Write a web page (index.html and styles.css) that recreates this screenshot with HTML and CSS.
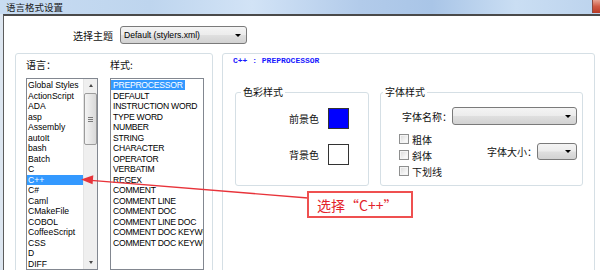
FILE: index.html
```html
<!DOCTYPE html>
<html lang="zh-CN">
<head>
<meta charset="utf-8">
<title>语言格式设置</title>
<link rel="stylesheet" href="styles.css">
</head>
<body>
<div class="titlebar">
  <span class="title">语言格式设置</span>
  <span class="close"></span>
</div>
<div class="frame">
  <div class="theme-row">
    <span class="cjk label">选择主题</span>
    <div class="combo theme-combo"><span>Default (stylers.xml)</span><i class="arrow"></i></div>
  </div>
  <div class="panels">
    <div class="group left-group">
      <div class="col lang-col">
        <div class="cjk heading">语言：</div>
        <div class="listbox lang-list">
          <ul class="items">
            <li>Global Styles</li>
            <li>ActionScript</li>
            <li>ADA</li>
            <li>asp</li>
            <li>Assembly</li>
            <li>autoIt</li>
            <li>bash</li>
            <li>Batch</li>
            <li>C</li>
            <li class="sel">C++</li>
            <li>C#</li>
            <li>Caml</li>
            <li>CMakeFile</li>
            <li>COBOL</li>
            <li>CoffeeScript</li>
            <li>CSS</li>
            <li>D</li>
            <li>DIFF</li>
          </ul>
          <div class="scrollbar">
            <div class="sb-btn"><i class="up"></i></div>
            <div class="thumb"><i></i><i></i><i></i></div>
            <div class="sb-track"></div>
            <div class="sb-btn"><i class="down"></i></div>
          </div>
        </div>
      </div>
      <div class="col style-col">
        <div class="cjk heading">样式:</div>
        <div class="listbox style-list">
          <ul class="items">
            <li><span class="sel">PREPROCESSOR</span></li>
            <li><span>DEFAULT</span></li>
            <li><span>INSTRUCTION WORD</span></li>
            <li><span>TYPE WORD</span></li>
            <li><span>NUMBER</span></li>
            <li><span>STRING</span></li>
            <li><span>CHARACTER</span></li>
            <li><span>OPERATOR</span></li>
            <li><span>VERBATIM</span></li>
            <li><span>REGEX</span></li>
            <li><span>COMMENT</span></li>
            <li><span>COMMENT LINE</span></li>
            <li><span>COMMENT DOC</span></li>
            <li><span>COMMENT LINE DOC</span></li>
            <li><span>COMMENT DOC KEYWORD</span></li>
            <li><span>COMMENT DOC KEYWORD ERROR</span></li>
          </ul>
        </div>
      </div>
    </div>
    <div class="group right-group">
      <div class="caption">C++ : PREPROCESSOR</div>
      <div class="subgroups">
        <fieldset class="fs color-fs">
          <legend class="cjk">色彩样式</legend>
          <div class="swatch-row first"><span class="cjk">前景色</span><span class="swatch fg"></span></div>
          <div class="swatch-row"><span class="cjk">背景色</span><span class="swatch bg"></span></div>
        </fieldset>
        <fieldset class="fs font-fs">
          <legend class="cjk">字体样式</legend>
          <div class="font-row">
            <span class="cjk">字体名称：</span>
            <div class="combo font-combo"><span></span><i class="arrow"></i></div>
          </div>
          <div class="font-row2">
            <div class="checks">
              <label class="check"><span class="box"></span><span class="cjk">粗体</span></label>
              <label class="check"><span class="box"></span><span class="cjk">斜体</span></label>
              <label class="check"><span class="box"></span><span class="cjk">下划线</span></label>
            </div>
            <div class="size-wrap">
              <span class="cjk">字体大小：</span>
              <div class="combo size-combo"><span></span><i class="arrow"></i></div>
            </div>
          </div>
        </fieldset>
      </div>
    </div>
  </div>
</div>
<svg class="pointer" width="600" height="270" viewBox="0 0 600 270">
  <line x1="308" y1="198" x2="91" y2="180.3" stroke="#e8333a" stroke-width="1.3"/>
  <polygon points="81,179.5 93.3,175.3 92.6,184.2" fill="#e8333a"/>
</svg>
<div class="callout">选择“C++”</div>
</body>
</html>
```

FILE: styles.css
```css
* { box-sizing: border-box; margin: 0; padding: 0; }
html, body { width: 600px; height: 270px; overflow: hidden; }
body {
  background: #dde6f0;
  font-family: "Liberation Sans", Arial, "Noto Sans CJK SC", sans-serif;
  font-size: 8.6px;
  color: #000;
  position: relative;
}
.cjk { font-family: "Noto Sans CJK SC", sans-serif; font-size: 10px; }

.titlebar {
  height: 14px;
  display: flex;
  justify-content: space-between;
  background: linear-gradient(90deg, #c8dcf2 0%, #bed5ee 25%, #d2e3f6 42%, #b2cbea 60%, #a9c5e7 72%, #cadef3 86%, #bcd3ed 100%);
}
.title {
  font-family: "Noto Sans CJK SC", sans-serif;
  font-size: 9.5px;
  line-height: 14px;
  padding-left: 6px;
  color: #1c1c1c;
}
.close {
  width: 8px;
  height: 13px;
  background: linear-gradient(#e7a392, #cf5a43 50%, #b93a26);
  border-left: 1px solid #8a4a40;
}

.frame {
  margin-left: 3px;
  border-left: 1px solid #5c5c5c;
  border-top: 2px solid #4a4a4a;
  background: #fff;
  height: 256px;
  padding-top: 10px;
}

.theme-row {
  display: flex;
  align-items: center;
  gap: 7px;
  padding-left: 69px;
  height: 18px;
}
.label { color: #111; }

.combo {
  height: 18px;
  border: 1px solid #7a7a7a;
  border-radius: 3px;
  background: linear-gradient(#f4f4f4 0%, #ececec 48%, #dfdfdf 52%, #d2d2d2 100%);
  display: flex;
  align-items: center;
  justify-content: space-between;
  padding: 0 5px 0 3px;
  white-space: nowrap;
}
.theme-combo { width: 127px; }
.arrow {
  width: 0; height: 0;
  border-left: 3px solid transparent;
  border-right: 3px solid transparent;
  border-top: 3px solid #000;
}

.panels {
  display: flex;
  gap: 9px;
  margin-top: 9px;
  padding-left: 11px;
}
.group {
  border: 1px solid #d5dfe5;
  border-radius: 3px;
  height: 230px;
}
.left-group {
  width: 198px;
  display: flex;
  gap: 12px;
  padding: 5px 0 0 10px;
}
.heading { line-height: 12px; height: 12px; margin-bottom: 7px; color: #111; }
.lang-col { width: 72px; }
.style-col { width: 94px; }

.listbox {
  height: 192px;
  border: 1px solid #828790;
  background: #fff;
  overflow: hidden;
}
.items { list-style: none; padding-top: 1px; }
.items li { line-height: 10.5px; height: 10.5px; white-space: nowrap; }

.lang-list { display: flex; }
.lang-list .items { width: 56px; }
.lang-list li { padding-left: 1px; }
.lang-list li.sel { background: #3399ff; color: #fff; }

.style-list .items { overflow: hidden; }
.style-list li span { display: inline-block; padding: 0 2px; letter-spacing: -0.25px; height: 10px; line-height: 10px; }
.style-list li span.sel { background: #3399ff; color: #fff; }

.scrollbar {
  width: 14px;
  background: #efefef;
  border-left: 1px solid #e4e4e4;
  display: flex;
  flex-direction: column;
}
.sb-btn { height: 13px; display: flex; align-items: center; justify-content: center; }
.up { width: 0; height: 0; border-left: 2.5px solid transparent; border-right: 2.5px solid transparent; border-bottom: 3px solid #4a4a4a; }
.down { width: 0; height: 0; border-left: 2.5px solid transparent; border-right: 2.5px solid transparent; border-top: 3px solid #4a4a4a; }
.thumb {
  height: 52px;
  margin: 1px 0 0 0;
  border: 1px solid #9c9c9c;
  border-radius: 2px;
  background: linear-gradient(90deg, #f4f4f4, #e6e6e6 50%, #d9d9d9);
  display: flex;
  flex-direction: column;
  align-items: center;
  justify-content: center;
  gap: 1px;
}
.thumb i { display: block; width: 5px; height: 1px; background: #7a7a7a; }
.sb-track { flex: 1; }

.right-group {
  width: 373px;
  padding: 2px 0 0 10px;
}
.caption {
  font-family: "Liberation Mono", "Courier New", monospace;
  font-weight: bold;
  font-size: 8px;
  line-height: 10px;
  color: #1a1aff;
}
.subgroups {
  display: flex;
  gap: 11px;
  margin: 20px 0 0 2px;
}
.fs {
  border: 1px solid #d5dfe5;
  border-radius: 3px;
  padding: 0;
  height: 100px;
}
.fs legend { line-height: 12px; padding: 0 2px; color: #111; }
.color-fs { width: 134px; }
.color-fs legend { margin-left: 5px; }
.font-fs { width: 203px; }
.font-fs legend { margin-left: 2px; }

.swatch-row {
  display: flex;
  justify-content: flex-end;
  align-items: center;
  gap: 9px;
  padding-right: 19px;
  margin-top: 15px;
  color: #111;
}
.swatch-row.first { margin-top: 10px; }
.swatch { width: 21px; height: 21px; border: 1px solid #333; }
.swatch.fg { background: #0000ff; }
.swatch.bg { background: #fff; }

.font-row {
  display: flex;
  justify-content: flex-end;
  align-items: center;
  padding-right: 5px;
  margin-top: 9px;
  color: #111;
}
.font-combo { width: 125px; }
.font-row2 {
  display: flex;
  padding: 0 5px 0 18px;
  margin-top: 6px;
}
.check {
  display: flex;
  align-items: center;
  gap: 3px;
  height: 16px;
  color: #111;
}
.box {
  width: 10px;
  height: 10px;
  border: 1px solid #8e8f8f;
  background: linear-gradient(135deg, #d9d9d9, #f6f6f6 70%, #fff);
  box-shadow: inset 0 0 0 1px #f4f4f4;
}
.size-wrap {
  margin-left: auto;
  margin-top: 12px;
  display: flex;
  align-items: center;
  align-self: flex-start;
  color: #111;
}
.size-combo { width: 40px; height: 17px; }

.pointer { position: absolute; left: 0; top: 0; pointer-events: none; }
.callout {
  position: absolute;
  left: 307px;
  top: 191px;
  width: 106px;
  height: 27px;
  border: 2px solid #ef5050;
  background: #fff;
  color: #e3232c;
  font-family: "Noto Sans CJK SC", sans-serif;
  font-size: 14px;
  display: flex;
  align-items: center;
  padding-left: 8px;
  white-space: nowrap;
}
```
